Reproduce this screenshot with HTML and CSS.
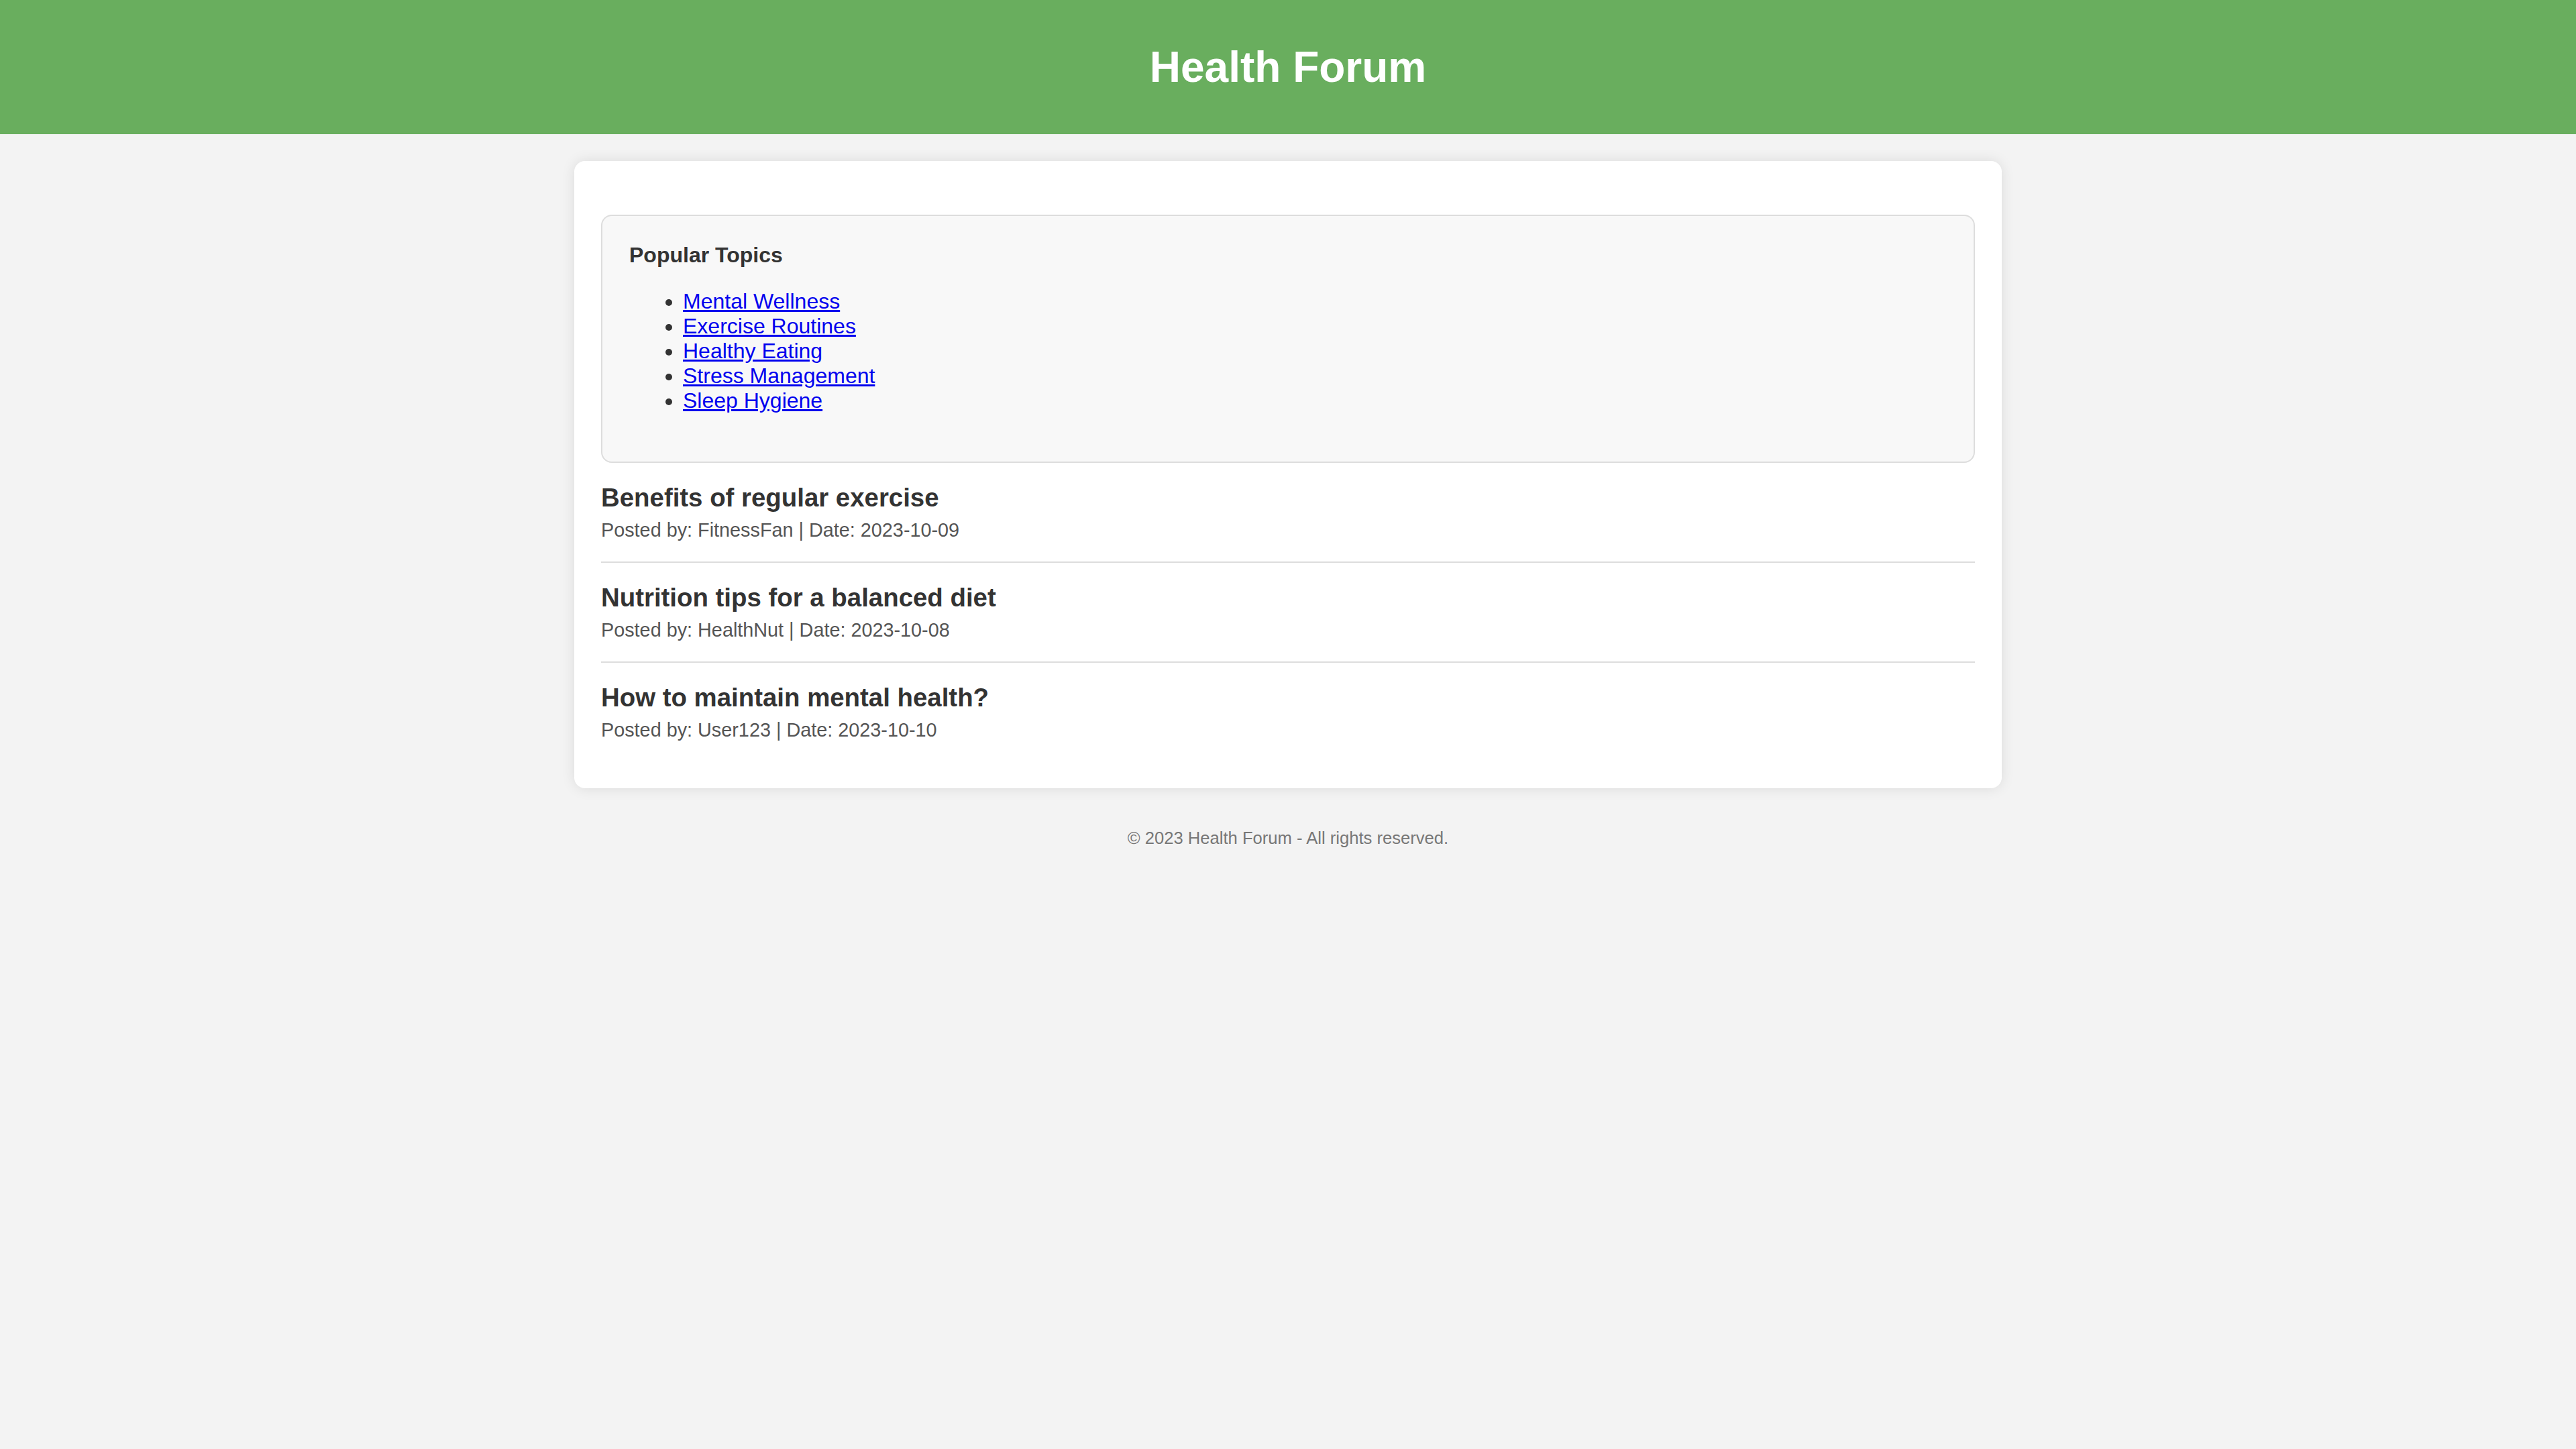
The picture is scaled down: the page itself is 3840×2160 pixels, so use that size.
FILE: index.html
```html
<!DOCTYPE html>
<html lang="en">
<head>
<meta charset="utf-8">
<title>Health Forum</title>
<link rel="stylesheet" href="styles.css">
</head>
<body>
<header class="site-header">
  <h1 class="site-title">Health Forum</h1>
</header>
<main class="container">
  <section class="topics">
    <h3 class="topics-title">Popular Topics</h3>
    <ul class="topics-list">
      <li><a href="#">Mental Wellness</a></li>
      <li><a href="#">Exercise Routines</a></li>
      <li><a href="#">Healthy Eating</a></li>
      <li><a href="#">Stress Management</a></li>
      <li><a href="#">Sleep Hygiene</a></li>
    </ul>
  </section>
  <article class="post">
    <h3 class="post-title">Benefits of regular exercise</h3>
    <p class="post-meta">Posted by: FitnessFan | Date: 2023-10-09</p>
  </article>
  <article class="post">
    <h3 class="post-title">Nutrition tips for a balanced diet</h3>
    <p class="post-meta">Posted by: HealthNut | Date: 2023-10-08</p>
  </article>
  <article class="post">
    <h3 class="post-title">How to maintain mental health?</h3>
    <p class="post-meta">Posted by: User123 | Date: 2023-10-10</p>
  </article>
</main>
<footer class="site-footer">
  <p class="footer-text">&copy; 2023 Health Forum - All rights reserved.</p>
</footer>
</body>
</html>
```

FILE: styles.css
```css
html, body {
  margin: 0;
  padding: 0;
}

body {
  font-family: "Liberation Sans", Arial, Helvetica, sans-serif;
  font-size: 32px;
  background: #f3f3f3;
  color: #333;
}

.site-header {
  background: #69ae5e;
  color: #fff;
  text-align: center;
  padding: 20px 0;
}

.site-title {
  font-size: 64px;
  font-weight: bold;
  margin: 42.88px 0;
  line-height: normal;
}

.container {
  max-width: 2048px;
  margin: 40px auto;
  padding: 40px;
  background: #fff;
  border-radius: 16px;
  box-shadow: 0 0 20px rgba(0, 0, 0, 0.1);
}

.topics {
  margin-top: 40px;
  padding: 40px;
  background: #f8f8f8;
  border: 2px solid #dddddd;
  border-radius: 16px;
}

.topics-title {
  margin: 0;
  font-size: 32px;
  font-weight: bold;
  color: #333;
}

.topics-list {
  margin: 32px 0;
  padding-left: 80px;
}

.topics-list li {
  color: #333;
}

.topics-list a {
  color: #0000ee;
  text-decoration: underline;
}

.post {
  padding: 30px 0;
  border-bottom: 2px solid #dddddd;
}

.post:last-child {
  border-bottom: none;
}

.post-title {
  margin: 0 0 10px;
  font-size: 38.4px;
  font-weight: bold;
  color: #333;
}

.post-meta {
  margin: 0;
  font-size: 28.8px;
  color: #555;
}

.site-footer {
  text-align: center;
  padding: 20px 0;
}

.footer-text {
  margin: 0;
  font-size: 25.6px;
  color: #777;
}
```
